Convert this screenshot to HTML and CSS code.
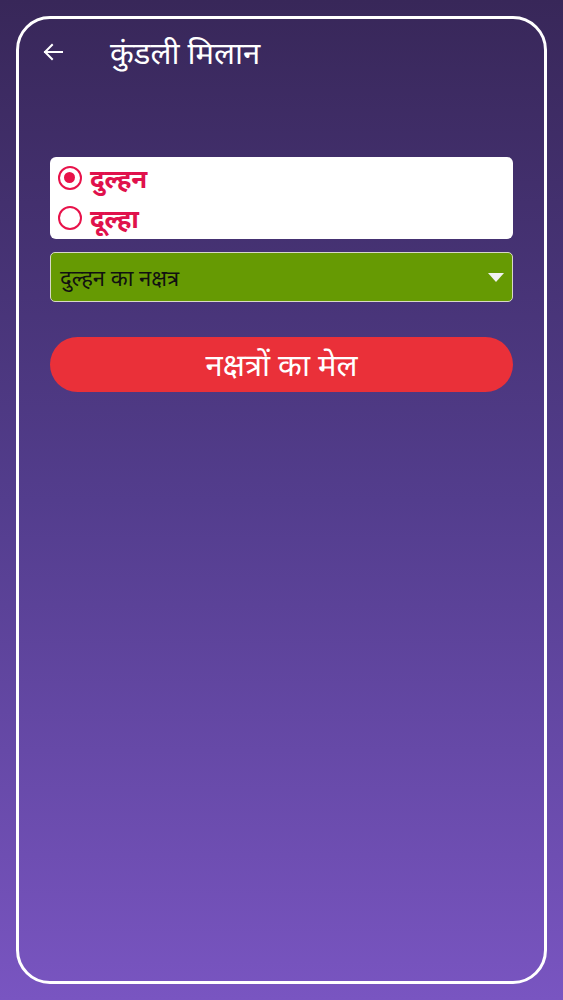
FILE: index.html
```html
<!DOCTYPE html>
<html lang="hi">
<head>
<meta charset="utf-8">
<title>कुंडली मिलान</title>
<link rel="stylesheet" href="styles.css">
</head>
<body>
<div class="frame">
  <header class="topbar">
    <svg class="back" viewBox="0 0 24 24" width="24" height="24"><path d="M21 12H4M11 5L4 12L11 19" fill="none" stroke="#fff" stroke-width="2" stroke-linecap="square"/></svg>
    <h1 class="title">कुंडली मिलान</h1>
  </header>
  <main class="content">
    <div class="card">
      <label class="radio"><span class="dot checked"></span><span class="rlabel">दुल्हन</span></label>
      <label class="radio"><span class="dot"></span><span class="rlabel">दूल्हा</span></label>
    </div>
    <div class="select">
      <span class="select-text">दुल्हन का नक्षत्र</span>
      <span class="caret"></span>
    </div>
    <button class="match">नक्षत्रों का मेल</button>
  </main>
</div>
</body>
</html>
```
FILE: styles.css
```css
* { box-sizing: border-box; }
html, body { margin: 0; height: 1000px; }
body {
  font-family: "Noto Sans", "Noto Sans Devanagari", "Lohit Devanagari", "FreeSans", sans-serif;
  background: linear-gradient(180deg, #382759 0%, #533d8d 50%, #7955c1 100%);
  padding: 16px;
}
.frame {
  height: 968px;
  border: 3px solid #ffffff;
  border-radius: 34px;
}
.topbar {
  display: flex;
  align-items: center;
  height: 40px;
  margin-top: 13px;
  padding-left: 22px;
}
.back { flex: none; }
.title {
  margin: 0 0 0 45px;
  color: #ffffff;
  font-weight: 400;
  font-size: 31px;
  line-height: 40px;
}
.content {
  padding: 85px 31px 0 31px;
  display: flex;
  flex-direction: column;
}
.card {
  background: #ffffff;
  border-radius: 6px;
  height: 82px;
  padding: 1px 0 0 8px;
  display: flex;
  flex-direction: column;
}
.radio {
  display: flex;
  align-items: center;
  height: 40px;
}
.dot {
  flex: none;
  width: 24px;
  height: 24px;
  border: 2.5px solid #e8124a;
  border-radius: 50%;
  margin-right: 8px;
  position: relative;
}
.dot.checked::after {
  content: "";
  position: absolute;
  left: 4px; top: 4px;
  width: 11px; height: 11px;
  border-radius: 50%;
  background: #e8124a;
}
.rlabel {
  color: #e0114c;
  font-weight: 700;
  font-size: 26px;
  line-height: 40px;
}
.select {
  margin-top: 13px;
  height: 50px;
  background: #669a03;
  border: 1.5px solid #d8d8c8;
  border-radius: 5px;
  display: flex;
  align-items: center;
  justify-content: space-between;
  padding: 0 8px 0 9px;
}
.select-text {
  color: #111;
  font-size: 22px;
}
.caret {
  width: 0; height: 0;
  border-left: 8px solid transparent;
  border-right: 8px solid transparent;
  border-top: 9px solid #f2f2f2;
}
.match {
  margin-top: 35px;
  height: 55px;
  border: none;
  border-radius: 28px;
  background: #ea3039;
  color: #ffffff;
  font-family: inherit;
  font-size: 31px;
  line-height: 55px;
  padding: 0;
}
```
